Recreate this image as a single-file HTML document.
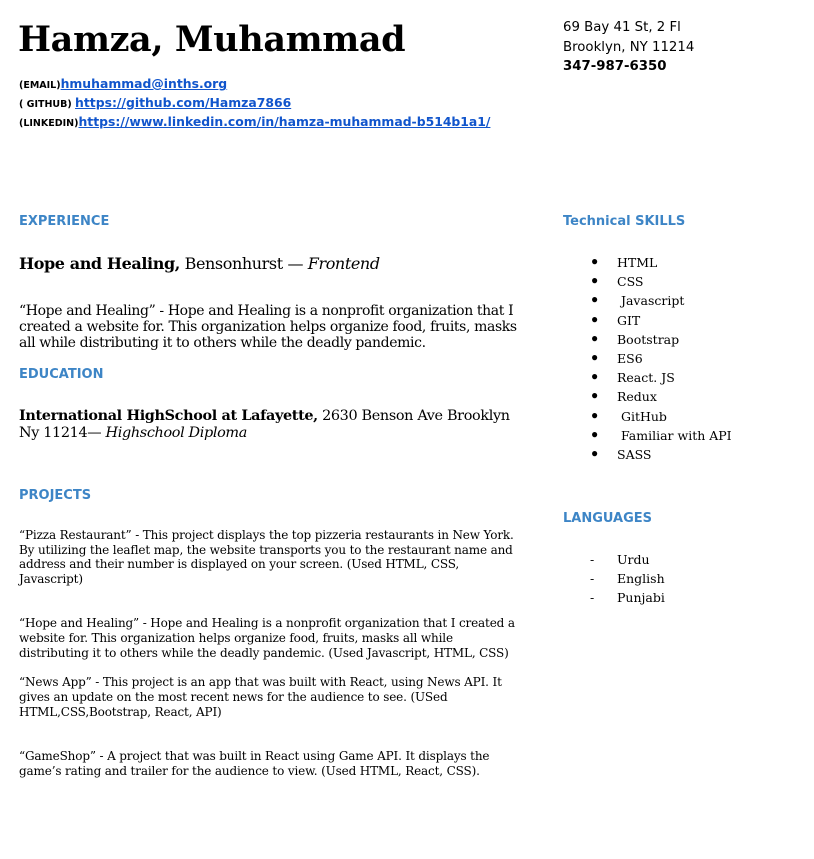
<!DOCTYPE html>
<html><head><meta charset="utf-8"><style>
body{margin:0;width:814px;height:859px;background:#fff;position:relative;overflow:hidden;color:#000}
div{position:absolute;white-space:nowrap}
.s{font-family:"DejaVu Serif","Liberation Serif",serif}
.a{font-family:"DejaVu Sans","Liberation Sans",sans-serif}
.h{font-family:"DejaVu Sans","Liberation Sans",sans-serif;font-weight:bold;color:#3d85c6;font-size:13px}
.lab{font-family:"DejaVu Sans",sans-serif;font-size:9.5px;font-weight:bold}
a{color:#1155cc;text-decoration:underline;font-family:"DejaVu Sans",sans-serif;font-weight:bold;font-size:12.4px}
.b{font-size:14px;letter-spacing:-0.38px}
.p{font-size:12px;letter-spacing:-0.15px}
.li{font-size:12.5px}
.dot{font-size:12px}
</style></head><body>
<div class="s" style="left:18px;top:19px;font-size:35px;font-weight:bold;letter-spacing:-0.4px">Hamza, Muhammad</div>
<div style="left:19px;top:75px"><span class="lab">(EMAIL)</span><a>hmuhammad@inths.org</a></div>
<div style="left:19px;top:94px"><span class="lab">( GITHUB) </span><a>https://github.com/Hamza7866</a></div>
<div style="left:19px;top:113px"><span class="lab">(LINKEDIN)</span><a>https://www.linkedin.com/in/hamza-muhammad-b514b1a1/</a></div>

<div class="a" style="left:563px;top:20px;font-size:13.3px">69 Bay 41 St, 2 Fl</div>
<div class="a" style="left:563px;top:40px;font-size:13.3px">Brooklyn, NY 11214</div>
<div class="a" style="left:563px;top:59px;font-size:13.3px;font-weight:bold">347-987-6350</div>

<div class="h" style="left:19px;top:214px">EXPERIENCE</div>
<div class="s" style="left:19px;top:254px;font-size:16px;letter-spacing:-0.4px"><b>Hope and Healing,</b> Bensonhurst — <i>Frontend</i></div>
<div class="s b" style="left:19px;top:303px">“Hope and Healing” - Hope and Healing is a nonprofit organization that I</div>
<div class="s b" style="left:19px;top:319px">created a website for. This organization helps organize food, fruits, masks</div>
<div class="s b" style="left:19px;top:335px">all while distributing it to others while the deadly pandemic.</div>

<div class="h" style="left:19px;top:367px">EDUCATION</div>
<div class="s" style="left:19px;top:407px;font-size:14.4px;letter-spacing:-0.35px"><b>International HighSchool at Lafayette,</b> 2630 Benson Ave Brooklyn</div>
<div class="s" style="left:19px;top:425px;font-size:14.4px;letter-spacing:-0.35px">Ny 11214— <i>Highschool Diploma</i></div>

<div class="h" style="left:19px;top:488px">PROJECTS</div>
<div class="s p" style="left:19px;top:528px">“Pizza Restaurant” - This project displays the top pizzeria restaurants in New York.</div>
<div class="s p" style="left:19px;top:543px">By utilizing the leaflet map, the website transports you to the restaurant name and</div>
<div class="s p" style="left:19px;top:557px">address and their number is displayed on your screen.  (Used HTML, CSS,</div>
<div class="s p" style="left:19px;top:572px">Javascript)</div>

<div class="s p" style="left:19px;top:616px">“Hope and Healing” - Hope and Healing is a nonprofit organization that I created a</div>
<div class="s p" style="left:19px;top:631px">website for. This organization helps organize food, fruits, masks all while</div>
<div class="s p" style="left:19px;top:646px">distributing it to others while the deadly pandemic. (Used Javascript, HTML, CSS)</div>

<div class="s p" style="left:19px;top:675px">“News App” - This project is an app that was built with React, using News API. It</div>
<div class="s p" style="left:19px;top:690px">gives an update on the most recent news for the audience to see. (USed</div>
<div class="s p" style="left:19px;top:705px">HTML,CSS,Bootstrap, React, API)</div>

<div class="s p" style="left:19px;top:749px">“GameShop” - A project that was built in React using Game API. It displays the</div>
<div class="s p" style="left:19px;top:764px">game’s rating and trailer for the audience to view. (Used HTML, React, CSS).</div>

<div class="h" style="left:563px;top:214px">Technical SKILLS</div>
<div class="dot" style="left:591px;top:252px;line-height:19.2px">●<br>●<br>●<br>●<br>●<br>●<br>●<br>●<br>●<br>●<br>●</div>
<div class="s li" style="left:617px;top:253px;line-height:19.2px">HTML<br>CSS<br>&nbsp;Javascript<br>GIT<br>Bootstrap<br>ES6<br>React. JS<br>Redux<br>&nbsp;GitHub<br>&nbsp;Familiar with API<br>SASS</div>

<div class="h" style="left:563px;top:511px">LANGUAGES</div>
<div class="s li" style="left:590px;top:550px;line-height:19.2px">-<br>-<br>-</div>
<div class="s li" style="left:617px;top:550px;line-height:19.2px">Urdu<br>English<br>Punjabi</div>
</body></html>
